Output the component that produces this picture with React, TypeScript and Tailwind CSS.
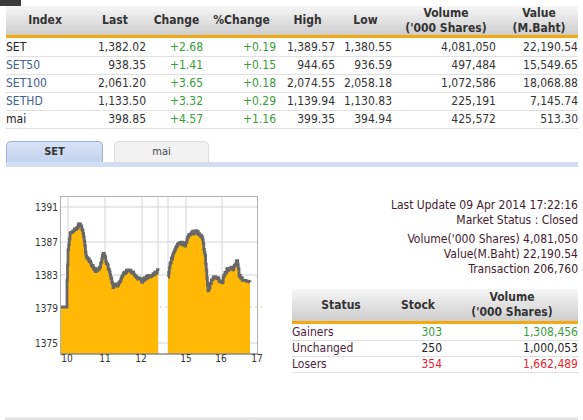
import React from "react";

interface IndexRow {
  name: string;
  nameColor: string;
  last: string;
  change: string;
  pct: string;
  high: string;
  low: string;
  volume: string;
  value: string;
}

const rows: IndexRow[] = [
  { name: "SET", nameColor: "text-[#222]", last: "1,382.02", change: "+2.68", pct: "+0.19", high: "1,389.57", low: "1,380.55", volume: "4,081,050", value: "22,190.54" },
  { name: "SET50", nameColor: "text-[#40608f]", last: "938.35", change: "+1.41", pct: "+0.15", high: "944.65", low: "936.59", volume: "497,484", value: "15,549.65" },
  { name: "SET100", nameColor: "text-[#40608f]", last: "2,061.20", change: "+3.65", pct: "+0.18", high: "2,074.55", low: "2,058.18", volume: "1,072,586", value: "18,068.88" },
  { name: "SETHD", nameColor: "text-[#40608f]", last: "1,133.50", change: "+3.32", pct: "+0.29", high: "1,139.94", low: "1,130.83", volume: "225,191", value: "7,145.74" },
  { name: "mai", nameColor: "text-[#222]", last: "398.85", change: "+4.57", pct: "+1.16", high: "399.35", low: "394.94", volume: "425,572", value: "513.30" },
];

// key points of the intraday line, in page pixels
const morning: [number, number][] = [
  [60, 307], [66.5, 307], [67, 280], [68, 250], [70, 234], [75, 229], [80, 224], [83, 232],
  [86, 256], [90, 262], [95, 271], [100, 267], [103, 252], [107, 264], [110, 274], [113, 286],
  [118, 285], [122, 275], [127, 270], [133, 272], [137, 277], [142, 281], [147, 277], [153, 275], [158, 270],
];
const afternoon: [number, number][] = [
  [168, 277], [170, 263], [175, 248], [180, 242], [185, 245], [190, 233], [197, 232], [202, 237],
  [205, 256], [208, 292], [212, 278], [217, 278], [222, 283], [225, 272], [230, 267], [233, 270],
  [237, 260], [239, 275], [243, 280], [250, 282],
];

function hash(n: number) {
  const s = Math.sin(n * 12.9898) * 43758.5453;
  return s - Math.floor(s);
}

// stepped line with tick noise, like a price series
function jagged(keys: [number, number][], noisy: (x: number) => boolean) {
  const pts: [number, number][] = [];
  let prevY = keys[0][1];
  pts.push([keys[0][0], prevY]);
  for (let k = 0; k < keys.length - 1; k++) {
    const [x0, y0] = keys[k];
    const [x1, y1] = keys[k + 1];
    const steps = Math.max(1, Math.round((x1 - x0) * 1.5));
    for (let s = 1; s <= steps; s++) {
      const t = s / steps;
      const x = x0 + (x1 - x0) * t;
      let y = y0 + (y1 - y0) * t;
      if (noisy(x)) y += (hash(x * 3.1) - 0.5) * 3.2;
      pts.push([x, prevY]);
      pts.push([x, y]);
      prevY = y;
    }
  }
  return pts;
}

function toStr(p: [number, number][]) {
  return p.map(([x, y]) => `${x.toFixed(1)},${y.toFixed(1)}`).join(" ");
}

function IntradayChart() {
  const a = jagged(morning, (x) => x > 69);
  const b = jagged(afternoon, (x) => x > 169 && x < 244);
  const fillA = toStr([[60, 354], ...a, [158, 354]]);
  const fillB = toStr([[168, 354], ...b, [250, 354]]);
  const yLabels = [
    { v: "1391", y: 207 },
    { v: "1387", y: 242 },
    { v: "1383", y: 275 },
    { v: "1379", y: 308 },
    { v: "1375", y: 343 },
  ];
  const xLabels = [
    { v: "10", x: 67 },
    { v: "11", x: 105 },
    { v: "12", x: 141 },
    { v: "15", x: 186 },
    { v: "16", x: 221 },
    { v: "17", x: 257 },
  ];
  return (
    <svg width="280" height="175" viewBox="0 190 280 175" className="shrink-0">
      <rect x="60" y="196" width="198" height="158" fill="#fff" />
      {[68, 105, 142, 158, 168, 186, 222].map((x) => (
        <line key={x} x1={x} y1="196" x2={x} y2="354" stroke="#d4d4d4" strokeWidth="1" />
      ))}
      {[207, 242, 275, 343].map((y) => (
        <line key={y} x1="60" y1={y} x2="258" y2={y} stroke="#d4d4d4" strokeWidth="1" />
      ))}
      <line x1="60" y1="307" x2="262" y2="307" stroke="#e6c9a0" strokeWidth="1" strokeDasharray="2 3" />
      <polygon points={fillA} fill="#ffb905" />
      <polygon points={fillB} fill="#ffb905" />
      <polyline points={toStr(a)} fill="none" stroke="#676767" strokeWidth="2.8" strokeLinejoin="miter" />
      <polyline points={toStr(b)} fill="none" stroke="#676767" strokeWidth="2.8" strokeLinejoin="miter" />
      <rect x="60.5" y="196.5" width="197" height="157.5" fill="none" stroke="#b0b0b0" strokeWidth="1" />
      <line x1="60" y1="354" x2="258" y2="354" stroke="#777" strokeWidth="1" />
      {yLabels.map((l) => (
        <text key={l.v} x="58" y={l.y + 3.5} textAnchor="end" fontSize="10" fill="#333" fontFamily="'DejaVu Sans Condensed','DejaVu Sans',sans-serif">
          {l.v}
        </text>
      ))}
      {xLabels.map((l) => (
        <text key={l.v} x={l.x} y="362" textAnchor="middle" fontSize="10" fill="#333" fontFamily="'DejaVu Sans Condensed','DejaVu Sans',sans-serif">
          {l.v}
        </text>
      ))}
    </svg>
  );
}

const colWidths = ["w-[78px]", "w-[66px]", "w-[57px]", "w-[73px]", "w-[59px]", "w-[57px]", "w-[104px]", "w-[78px]"];

export default function App() {
  return (
    <div className="w-[583px] h-[420px] bg-white overflow-hidden text-[12px] text-[#333] font-['DejaVu_Sans_Condensed','DejaVu_Sans',sans-serif]">
      {/* top strip */}
      <div className="h-[6px]">
        <div className="w-[21px] h-full bg-[#3b3b3b]" />
      </div>

      {/* index table */}
      <div className="ml-[6px] w-[572px]">
        <div className="flex h-[32px] items-center border-b-[3px] border-[#f5a910] bg-gradient-to-b from-[#f6f6f6] to-[#cdcdcd] font-bold text-[#333] leading-[15px]">
          <div className={`${colWidths[0]} text-center`}>Index</div>
          <div className={`${colWidths[1]} text-center pr-1`}>Last</div>
          <div className={`${colWidths[2]} text-center pr-1`}>Change</div>
          <div className={`${colWidths[3]} text-center pr-1`}>%Change</div>
          <div className={`${colWidths[4]} text-center pr-1`}>High</div>
          <div className={`${colWidths[5]} text-center pr-1`}>Low</div>
          <div className={`${colWidths[6]} text-center pr-1`}>
            Volume
            <br />
            ('000 Shares)
          </div>
          <div className={`${colWidths[7]} text-center`}>
            Value
            <br />
            (M.Baht)
          </div>
        </div>
        <div className="pt-[1px]">
          {rows.map((r) => (
            <div key={r.name} className="flex h-[18px] items-center border-b border-[#e0e0e0] leading-[17px]">
              <div className={`${colWidths[0]} ${r.nameColor}`}>{r.name}</div>
              <div className={`${colWidths[1]} text-right pr-1`}>{r.last}</div>
              <div className={`${colWidths[2]} text-right pr-1 text-[#3a9b3a]`}>{r.change}</div>
              <div className={`${colWidths[3]} text-right pr-1 text-[#3a9b3a]`}>{r.pct}</div>
              <div className={`${colWidths[4]} text-right pr-1`}>{r.high}</div>
              <div className={`${colWidths[5]} text-right pr-1`}>{r.low}</div>
              <div className={`${colWidths[6]} text-right pr-1`}>{r.volume}</div>
              <div className={`${colWidths[7]} text-right`}>{r.value}</div>
            </div>
          ))}
        </div>
      </div>

      {/* tabs */}
      <div className="ml-[6px] w-[572px] mt-[12px]">
        <div className="flex items-end gap-[11px] h-[21px]">
          <div className="w-[97px] h-[21px] rounded-t-[5px] border border-b-0 border-[#9db0d3] bg-gradient-to-b from-[#d6e2f6] to-[#c4d4ef] flex items-center justify-center text-[11px] font-bold text-[#333]">
            SET
          </div>
          <div className="w-[95px] h-[21px] rounded-t-[5px] border border-b-0 border-[#dcdcdc] bg-[#f1f1f1] flex items-center justify-center text-[11px] text-[#444]">
            mai
          </div>
        </div>
        <div className="h-[5px] bg-[#d2ddf4]" />
      </div>

      {/* chart + market summary */}
      <div className="flex mt-[23px] h-[175px]">
        <IntradayChart />
        <div className="flex-1 flex flex-col items-end pr-[5px] pt-[8px] text-[#43202f] leading-[15px]">
          <div>Last Update 09 Apr 2014 17:22:16</div>
          <div>Market Status : Closed</div>
          <div className="mt-[4px]">Volume('000 Shares) 4,081,050</div>
          <div>Value(M.Baht) 22,190.54</div>
          <div>Transaction 206,760</div>

          <div className="w-[286px] mt-[12px] text-[#333]">
            <div className="flex h-[35px] items-center border-b-[3px] border-[#f5a910] bg-gradient-to-b from-[#f6f6f6] to-[#cdcdcd] font-bold leading-[15px]">
              <div className="w-[98px] text-center">Status</div>
              <div className="w-[56px] text-center">Stock</div>
              <div className="flex-1 text-center">
                Volume
                <br />
                ('000 Shares)
              </div>
            </div>
            <div className="pt-[1px]">
              {[
                { label: "Gainers", stock: "303", vol: "1,308,456", color: "text-[#3a9b3a]" },
                { label: "Unchanged", stock: "250", vol: "1,000,053", color: "text-[#222]" },
                { label: "Losers", stock: "354", vol: "1,662,489", color: "text-[#e8232d]" },
              ].map((s) => (
                <div key={s.label} className="flex h-[16px] items-center border-b border-[#e0e0e0] leading-[15px]">
                  <div className="w-[98px] text-[#4d2440]">{s.label}</div>
                  <div className={`w-[56px] text-right pr-1 ${s.color}`}>{s.stock}</div>
                  <div className={`flex-1 text-right ${s.color}`}>{s.vol}</div>
                </div>
              ))}
            </div>
          </div>
        </div>
      </div>

      {/* bottom bar */}
      <div className="ml-[5px] w-[573px] mt-[52px] h-[4px] bg-gradient-to-b from-[#ececec] to-[#dadada]" />
    </div>
  );
}
